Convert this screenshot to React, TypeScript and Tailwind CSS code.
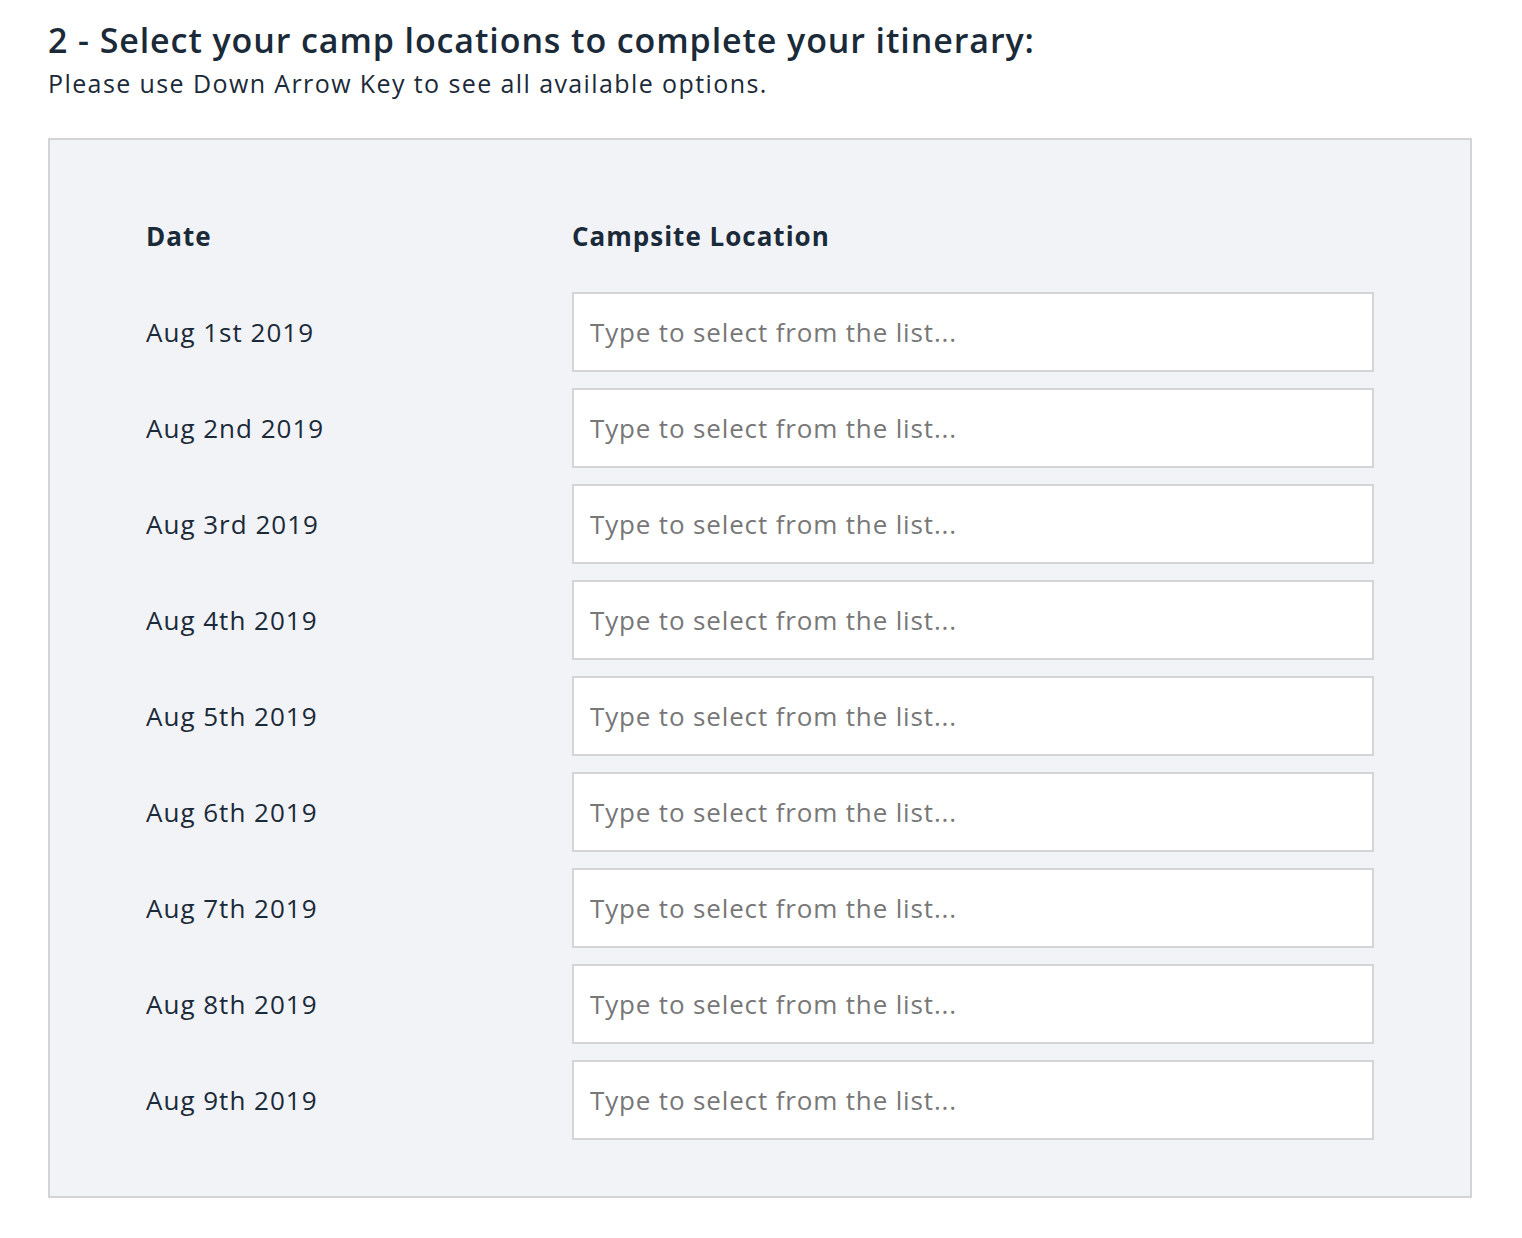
import React from "react";

const dates = [
  "Aug 1st 2019",
  "Aug 2nd 2019",
  "Aug 3rd 2019",
  "Aug 4th 2019",
  "Aug 5th 2019",
  "Aug 6th 2019",
  "Aug 7th 2019",
  "Aug 8th 2019",
  "Aug 9th 2019",
];

export default function App() {
  return (
    <div
      className="min-h-[1238px] bg-white px-[48px] pt-[18px] text-[#1b2a38]"
      style={{ fontFamily: '"Open Sans", "Noto Sans", sans-serif' }}
    >
      <h1 className="text-[34px] font-semibold leading-[44px] tracking-[0.9px]">
        2 - Select your camp locations to complete your itinerary:
      </h1>
      <p className="text-[25px] leading-[34px] mt-[4px] tracking-[1.4px]">
        Please use Down Arrow Key to see all available options.
      </p>
      <div className="mt-[38px] w-[1424px] border-2 border-[#d2d4d8] bg-[#f1f3f7] px-[96px] pt-[80px] pb-[56px]">
        <div className="grid grid-cols-[426px_1fr] items-center tracking-[1px]">
          <div className="text-[26px] font-bold leading-[32px]">Date</div>
          <div className="text-[26px] font-bold leading-[32px]">Campsite Location</div>
        </div>
        <div className="mt-[40px] flex flex-col gap-[16px]">
          {dates.map((d) => (
            <div key={d} className="grid grid-cols-[426px_1fr] items-center">
              <div className="text-[26px] leading-[34px] tracking-[1px]">{d}</div>
              <input
                type="text"
                placeholder="Type to select from the list..."
                className="h-[80px] w-full border-2 border-[#d3d5d9] bg-white px-[16px] text-[26px] tracking-[0.85px] text-[#1b2a38] placeholder:text-[#777777] outline-none"
                style={{ fontFamily: '"Open Sans", "Noto Sans", sans-serif' }}
              />
            </div>
          ))}
        </div>
      </div>
    </div>
  );
}
